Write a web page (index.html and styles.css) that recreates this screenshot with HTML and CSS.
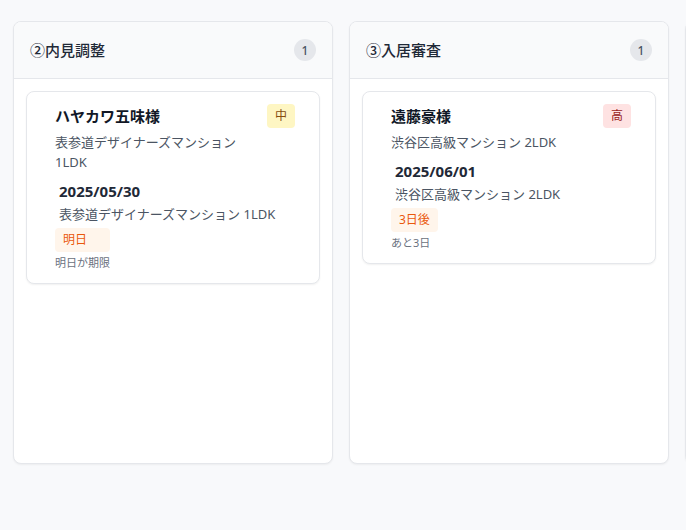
FILE: index.html
```html
<!DOCTYPE html>
<html lang="ja">
<head>
<meta charset="utf-8">
<title>Board</title>
<link rel="stylesheet" href="styles.css">
</head>
<body>
<div class="board">
  <section class="column">
    <header class="col-head">
      <h2 class="col-title">②内見調整</h2>
      <span class="count">1</span>
    </header>
    <div class="col-body">
      <article class="card">
        <div class="card-top">
          <div class="card-main">
            <h3 class="name">ハヤカワ五味様</h3>
            <p class="prop">表参道デザイナーズマンション 1LDK</p>
          </div>
          <span class="prio prio-mid">中</span>
        </div>
        <div class="sched">
          <div class="date">2025/05/30</div>
          <div class="addr">表参道デザイナーズマンション 1LDK</div>
        </div>
        <span class="due due-wide">明日</span>
        <div class="note">明日が期限</div>
      </article>
    </div>
  </section>
  <section class="column">
    <header class="col-head">
      <h2 class="col-title">③入居審査</h2>
      <span class="count">1</span>
    </header>
    <div class="col-body">
      <article class="card">
        <div class="card-top">
          <div class="card-main">
            <h3 class="name">遠藤豪様</h3>
            <p class="prop">渋谷区高級マンション 2LDK</p>
          </div>
          <span class="prio prio-high">高</span>
        </div>
        <div class="sched">
          <div class="date">2025/06/01</div>
          <div class="addr">渋谷区高級マンション 2LDK</div>
        </div>
        <span class="due">3日後</span>
        <div class="note">あと3日</div>
      </article>
    </div>
  </section>
  <section class="column">
    <header class="col-head"></header>
    <div class="col-body"></div>
  </section>
</div>
</body>
</html>
```
FILE: styles.css
```css
* { box-sizing: border-box; }
html, body {
  margin: 0;
  padding: 0;
  background: #f8f9fb;
  font-family: "Noto Sans", "Noto Sans CJK JP", sans-serif;
  color: #1f2937;
  overflow: hidden;
}
.board {
  display: flex;
  gap: 16px;
  padding: 21px 13px;
}
.column {
  flex: 0 0 320px;
  height: 443px;
  background: #ffffff;
  border: 1px solid #e5e7eb;
  border-radius: 8px;
  box-shadow: 0 1px 2px rgba(0, 0, 0, 0.05);
  display: flex;
  flex-direction: column;
  overflow: hidden;
}
.col-head {
  flex: 0 0 57px;
  height: 57px;
  padding: 0 16px;
  background: #f9fafb;
  border-bottom: 1px solid #e5e7eb;
  display: flex;
  align-items: center;
  justify-content: space-between;
}
.col-title {
  margin: 0;
  font-size: 15px;
  font-weight: 500;
  color: #1f2937;
  line-height: 24px;
}
.count {
  width: 22px;
  height: 22px;
  border-radius: 11px;
  background: #e5e7eb;
  color: #4b5563;
  font-size: 12px;
  font-weight: 500;
  display: flex;
  align-items: center;
  justify-content: center;
}
.col-body {
  padding: 12px;
  flex: 1;
}
.card {
  background: #ffffff;
  border: 1px solid #e5e7eb;
  border-radius: 8px;
  box-shadow: 0 1px 2px rgba(0, 0, 0, 0.06);
  padding: 12px 24px 12px 28px;
}
.card-top {
  display: flex;
  align-items: flex-start;
  justify-content: space-between;
  gap: 8px;
}
.card-main { flex: 1; min-width: 0; }
.name {
  margin: 0;
  font-size: 15px;
  font-weight: 700;
  line-height: 24px;
  color: #111827;
}
.prop {
  margin: 4px 0 0;
  font-size: 13px;
  line-height: 20px;
  color: #4b5563;
}
.prio {
  flex: 0 0 auto;
  height: 24px;
  padding: 0 8px;
  border-radius: 4px;
  font-size: 12px;
  line-height: 24px;
}
.prio-mid { background: #fef6c3; color: #854d0e; }
.prio-high { background: #fee2e2; color: #991b1b; }
.sched {
  margin-top: 7px;
  padding-left: 4px;
}
.date {
  font-size: 15px;
  font-weight: 700;
  line-height: 24px;
  color: #1f2937;
}
.addr {
  margin-top: 1px;
  font-size: 13px;
  line-height: 20px;
  color: #4b5563;
}
.due {
  display: inline-block;
  margin-top: 4px;
  height: 24px;
  padding: 0 8px;
  border-radius: 4px;
  background: #fff5eb;
  color: #ea580c;
  font-size: 12px;
  line-height: 24px;
}
.due-wide { min-width: 55px; }
.note {
  margin-top: 3px;
  font-size: 11px;
  line-height: 16px;
  color: #6b7280;
}
```
